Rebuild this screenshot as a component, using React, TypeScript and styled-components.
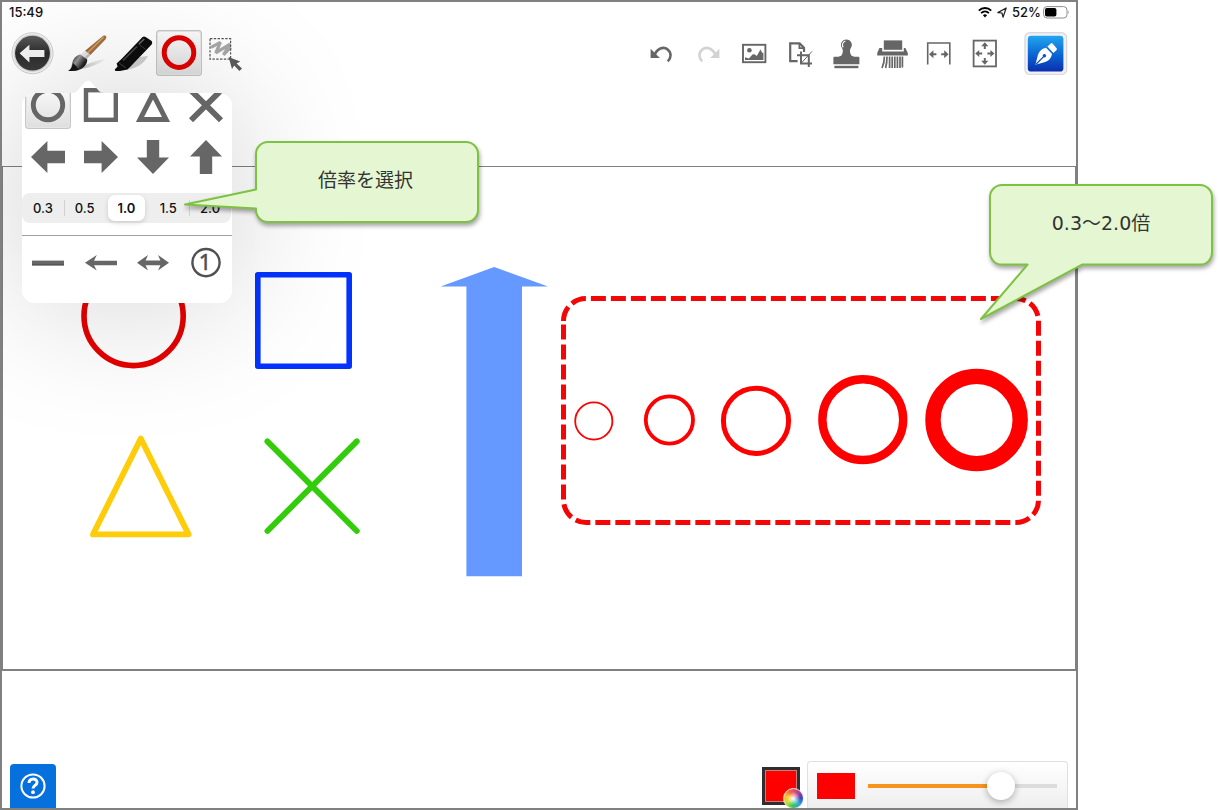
import React, { useState } from "react";
import styled, { createGlobalStyle, css } from "styled-components";

const INK = "#666666";

const GlobalStyle = createGlobalStyle`
  *, *::before, *::after { box-sizing: border-box; }
  body { margin: 0; background: #ffffff; font-family: Inter, "Noto Sans CJK JP", sans-serif; }
  button { font: inherit; }
`;

const Page = styled.div`
  position: relative;
  min-height: 100vh;
  padding-right: 142px;
  display: flex;
`;

const Device = styled.main`
  position: relative;
  overflow: hidden;
  flex: 1;
  display: flex;
  flex-direction: column;
  border: 2px solid #808080;
  background: #ffffff;
`;

const StatusBar = styled.header`
  display: flex;
  align-items: center;
  justify-content: space-between;
  height: 20px;
  padding: 0 6px 0 7px;
  font-size: 13px;
  font-weight: 500;
  line-height: 20px;
  color: #111111;
`;

const StatusGroup = styled.div<{ $gap: number }>`
  display: flex;
  align-items: center;
  gap: ${(p) => p.$gap}px;
`;

const Toolbar = styled.nav`
  display: flex;
  justify-content: space-between;
  padding: 8px 8px 6px;
`;

const ToolGroup = styled.div`
  display: flex;
`;

const ToolButton = styled.button<{ $active?: boolean; $gapAfter?: number; $gapBefore?: number }>`
  display: block;
  width: 46px;
  height: 46px;
  padding: 0;
  border: 0;
  background: none;
  margin-right: ${(p) => p.$gapAfter ?? 0}px;
  margin-left: ${(p) => p.$gapBefore ?? 0}px;
  ${(p) =>
    p.$active &&
    css`
      border-radius: 4px;
      background: linear-gradient(#fcfcfc, #dedede);
      box-shadow: inset 0 0 0 1px #c6c6c6, inset 0 0 0 2px #e6e6e6;
    `}
`;

const Glyph = styled.svg`
  display: block;
  width: 46px;
  height: 46px;
`;

const Canvas = styled.section`
  flex: 1;
  margin: 84px 0 90px;
  border: 1px solid #808080;
  border-bottom-width: 2px;
  overflow: hidden;
`;

const Drawing = styled.svg`
  display: block;
  width: 100%;
`;

const Footer = styled.footer`
  display: flex;
  align-items: flex-end;
  height: 47px;
  padding: 0 8px;
`;

const HelpButton = styled.button`
  display: grid;
  place-items: center;
  width: 46px;
  height: 44px;
  margin-right: auto;
  padding: 0;
  border: 0;
  border-radius: 4px 4px 0 0;
  background: #0670dc;
`;

const SwatchButton = styled.button`
  position: relative;
  align-self: flex-start;
  width: 38px;
  height: 38px;
  margin: 6px 7px 0 0;
  padding: 0;
  border: 3px solid #2e2e2e;
  background: #ff0000;
  box-shadow: inset 0 0 0 1px #c08080;
`;

const ColorWheel = styled.span`
  position: absolute;
  right: -7px;
  bottom: -7px;
  width: 21px;
  height: 21px;
  border: 1px solid #e8e8e8;
  border-radius: 50%;
  background: radial-gradient(#ffffff 0, #ffffff00 50%),
    conic-gradient(#e8506a, #a03f98 50deg, #3c46b8 85deg, #2ea6dc 130deg, #35c45c 185deg, #cfe030 240deg, #f8c030 290deg, #f46a30 330deg, #e8506a);
`;

const SizePanel = styled.div`
  display: flex;
  align-items: center;
  height: 48px;
  margin-bottom: -1px;
  padding: 1px 10px 0 9px;
  border: 1px solid #e0e0e0;
  border-bottom: 0;
  border-radius: 4px 4px 0 0;
  background: linear-gradient(#ffffff, #eeeeee);
`;

const PreviewChip = styled.span`
  width: 38px;
  height: 26px;
  margin-right: 13px;
  background: #ff0000;
`;

const Slider = styled.input<{ $fill: number }>`
  appearance: none;
  width: 189px;
  height: 30px;
  margin: 0;
  background: linear-gradient(to right, #f7941d ${(p) => p.$fill}%, #dcdcdc ${(p) => p.$fill}%) center / 100% 4px no-repeat;
  &::-webkit-slider-thumb {
    appearance: none;
    width: 28px;
    height: 28px;
    border-radius: 50%;
    background: #ffffff;
    box-shadow: 0 2px 7px rgba(0, 0, 0, 0.3);
  }
`;

const Popover = styled.div`
  position: absolute;
  left: 20px;
  top: 78px;
  width: 210px;
  &::before {
    content: "";
    position: absolute;
    inset: 13px 0 0;
    border-radius: 13px;
    box-shadow: 0 0 140px rgba(0, 0, 0, 0.18);
  }
`;

const PopoverBody = styled.div`
  position: relative;
  padding: 3px 0 17px;
  background: #ffffff;
  clip-path: path("M0 26A13 13 0 0 1 13 13H50Q53 13 55 11L63 2Q66 -1 69 2L77 11Q79 13 82 13H197A13 13 0 0 1 210 26V210A13 13 0 0 1 197 223H13A13 13 0 0 1 0 210Z");
`;

const ShapeGrid = styled.div`
  display: grid;
  grid-template-columns: repeat(4, 1fr);
  justify-items: center;
  row-gap: 5px;
`;

const Divider = styled.hr`
  height: 1px;
  margin: 12px 0 4px;
  border: 0;
  background: #a0a0a0;
`;

const Segments = styled.fieldset`
  display: grid;
  grid-template-columns: repeat(5, 1fr);
  height: 30px;
  margin: 13px 1px 0 0;
  padding: 0;
  border: 0;
  border-radius: 8px;
  background: #eeeeee;
`;

const Segment = styled.label<{ $on: boolean; $rule: boolean }>`
  position: relative;
  display: flex;
  align-items: center;
  justify-content: center;
  margin: 2px;
  border-radius: 7px;
  font-size: 13px;
  font-weight: ${(p) => (p.$on ? 600 : 500)};
  color: #111111;
  background: ${(p) => (p.$on ? "#ffffff" : "transparent")};
  box-shadow: ${(p) => (p.$on ? "0 2px 5px rgba(0, 0, 0, 0.14)" : "none")};
  &::after {
    content: "";
    position: absolute;
    left: -2px;
    top: 5px;
    bottom: 5px;
    width: 1px;
    background: ${(p) => (p.$rule ? "#d2d2d4" : "transparent")};
  }
  input {
    position: absolute;
    inset: 0;
    margin: 0;
    opacity: 0;
  }
`;

const Callout = styled.aside<{ $w: number; $h: number }>`
  position: absolute;
  display: flex;
  width: ${(p) => p.$w}px;
  height: ${(p) => p.$h}px;
  color: #333333;
  font-family: "DejaVu Sans", "Noto Sans CJK JP", sans-serif;
  font-weight: 400;
  font-size: 19px;
  line-height: 28px;
`;

const ScaleCallout = styled(Callout)`
  left: 180px;
  top: 136px;
`;

const RangeCallout = styled(Callout)`
  right: 0;
  top: 179px;
`;

const CalloutShape = styled.svg`
  position: absolute;
  inset: 0;
  filter: drop-shadow(1px 3px 2px rgba(0, 0, 0, 0.35));
`;

const CalloutText = styled.p<{ $left: number; $width: number }>`
  position: relative;
  width: ${(p) => p.$width}px;
  margin: 30px 0 0 ${(p) => p.$left}px;
  text-align: center;
`;

const BackIcon = () => (
  <Glyph viewBox="0 0 46 46" aria-hidden>
    <defs>
      <linearGradient id="back" x1="0" y1="0" x2="0" y2="1">
        <stop offset="0" stopColor="#5a5a5a" />
        <stop offset="0.5" stopColor="#2c2c2c" />
        <stop offset="1" stopColor="#3c3c3c" />
      </linearGradient>
    </defs>
    <circle cx="22.5" cy="23.2" r="20.5" fill="#f6f6f6" stroke="#cfcfcf" />
    <circle cx="22.5" cy="23.2" r="18.8" fill="#d6d6d6" />
    <circle cx="22.5" cy="23.2" r="17.4" fill="url(#back)" />
    <path d="M9.6 23.2 19.4 14.8V20H34.4V27H19.4V32.4Z" fill="#f4f4f4" />
  </Glyph>
);

const BrushIcon = () => (
  <Glyph viewBox="0 0 46 46" aria-hidden>
    <defs>
      <linearGradient id="hair" x1="0" y1="0" x2="1" y2="0.6">
        <stop offset="0.2" stopColor="#1c1c1c" />
        <stop offset="0.5" stopColor="#9a9a9a" />
        <stop offset="0.85" stopColor="#222222" />
      </linearGradient>
      <linearGradient id="shade" x1="0" y1="0" x2="1" y2="0">
        <stop offset="0" stopColor="#777777" stopOpacity="0.6" />
        <stop offset="1" stopColor="#aaaaaa" stopOpacity="0.1" />
      </linearGradient>
    </defs>
    <path d="M12 40C20 39 33 36 42 29C34 30 25 33 20 36Z" fill="url(#shade)" />
    <path d="M41 5.5C43 6 42.6 8 41.4 9.6L26.4 25L21 20.8L38 6.8Q39.6 5.2 41 5.5Z" fill="#a5703e" />
    <path d="M39.6 7 24 22.6" stroke="#d3a373" strokeWidth="1.4" />
    <path d="M21 20.8 26.4 25 22.6 29 17 24.4Z" fill="#e4e4e4" />
    <path d="M26.4 25 24.6 23.6 20.8 27.4 22.6 29Z" fill="#bdbdbd" />
    <path d="M16.6 24.6 23.2 29.6C23.6 34 20 38.4 14.6 40C11 41 7.6 41.2 4.2 40.8C8 38.8 7.4 35.6 8.6 31.8C10 27.8 13 25 16.6 24.6Z" fill="url(#hair)" />
    <path d="M4.2 40.8C8 38.8 8 36 9 33L13 37L14.6 40C11 41 7.6 41.2 4.2 40.8Z" fill="#161616" />
  </Glyph>
);

const MarkerIcon = () => (
  <Glyph viewBox="0 0 46 46" aria-hidden>
    <path d="M16 40C25 39 34 34 38 26L30 27Z" fill="#b0b0b0" opacity="0.6" />
    <path d="M32.6 7Q34 6 35.6 7L41 10.4Q43 12 41.6 14.6L20.6 36.6L17.4 39.6L10 41H5.4L4.8 39.4L7.6 36.4L6.6 33.6L12 28.4Z" fill="#0d0d0d" />
    <path d="M27 16.6 13 30.6" stroke="#4a4a4a" strokeWidth="1.4" />
    <path d="M34.2 9 29 14" stroke="#6a6a6a" strokeWidth="1.6" />
    <path d="M28 13.6 35.6 19.4" stroke="#3a3a3a" strokeWidth="1" />
    <path d="M9 33 15.6 37.6" stroke="#444444" strokeWidth="1" />
  </Glyph>
);

const RedRingIcon = () => (
  <Glyph viewBox="0 0 46 46" aria-hidden>
    <circle cx="23" cy="22.6" r="14.8" fill="none" stroke="#e00000" strokeWidth="5" />
  </Glyph>
);

const LassoIcon = () => (
  <Glyph viewBox="0 0 46 46" aria-hidden>
    <path d="M9 17.4 18.4 12.4 13.8 22.8 28 14.2 21.4 24.8 28.8 17.4" fill="none" stroke="#a8a8a8" strokeWidth="3.2" strokeLinejoin="bevel" />
    <rect x="8" y="8.6" width="20.6" height="20.6" fill="none" stroke="#555555" strokeWidth="1.2" strokeDasharray="2.4 1.4" />
    <path d="M26.6 27 38.2 31.4 34.6 33.4 40 38.6 37.4 41 32.2 35.6 30 39Z" fill="#5c5c5c" />
  </Glyph>
);

const undoArt = (
  <>
    <path d="M11.6 18.8V28H21L17.8 25Z" />
    <path d="M15.6 25C18 18.4 24.4 16.2 28.6 19.4C32.6 22.6 32.4 28 28.8 31.4" fill="none" strokeWidth="2.6" />
  </>
);

const UndoIcon = () => (
  <Glyph viewBox="0 0 46 46" fill={INK} stroke={INK} strokeWidth="0" aria-hidden>{undoArt}</Glyph>
);

const RedoIcon = () => (
  <Glyph viewBox="0 0 46 46" fill="#d2d2d2" stroke="#d2d2d2" strokeWidth="0" aria-hidden>
    <g transform="matrix(-1 0 0 1 46 0)">{undoArt}</g>
  </Glyph>
);

const ImageIcon = () => (
  <Glyph viewBox="0 0 46 46" aria-hidden>
    <rect x="12" y="14.8" width="22.4" height="17.4" fill="none" stroke={INK} strokeWidth="1.9" />
    <circle cx="18.4" cy="20.2" r="2.3" fill={INK} />
    <path d="M14 30V27.2L18 28.4 21.4 24.6 23.6 24.2 25.8 26 29.4 19.6 31.4 23 32.4 22.4V30Z" fill={INK} />
  </Glyph>
);

const CropIcon = () => (
  <Glyph viewBox="0 0 46 46" fill="none" stroke={INK} aria-hidden>
    <path d="M20.6 31.2H13.2V13.4H22.6L27 17.8V22" strokeWidth="2.2" />
    <path d="M22.4 13V18.2H27.4" strokeWidth="1.8" />
    <path d="M24 21.4V33.4H35M20 25.2H31.8V37" strokeWidth="2" />
    <path d="M24.6 32.8 35 21.4" strokeWidth="1" />
  </Glyph>
);

const StampIcon = () => (
  <Glyph viewBox="0 0 46 46" fill={INK} aria-hidden>
    <path d="M23.4 9.4A5.4 5.4 0 0 1 27.6 18.2C26.6 20.4 26.6 23 28.6 25.8L31.4 26.8H35.4Q36.4 26.8 36.4 27.8V34.2H10.4V27.8Q10.4 26.8 11.4 26.8H15.4L18.2 25.8C20.2 23 20.2 20.4 19.2 18.2A5.4 5.4 0 0 1 23.4 9.4Z" />
    <rect x="11.4" y="35.8" width="24" height="2.4" />
    <path d="M20.2 17.4C18.6 14.8 19.6 12 22.4 11" fill="none" stroke="#ffffff" strokeWidth="1.1" />
  </Glyph>
);

const ShredderIcon = () => (
  <Glyph viewBox="0 0 46 46" fill={INK} aria-hidden>
    <rect x="14.8" y="10.4" width="18.4" height="9.4" />
    <path d="M10.4 18H13.2V21.4H34.8V18H36.4L38.8 23V25.4H8.2V23Z" />
    <path d="M15.4 26.6Q15.4 33 13 38M18 26.6Q18 33 16.6 38M20.6 26.6V38M23.2 26.6V38M25.8 26.6V38M28.4 26.6V38M31 26.6V38M33.4 26.6V37.6" fill="none" stroke={INK} strokeWidth="1.7" />
  </Glyph>
);

const FitWidthIcon = () => (
  <Glyph viewBox="0 0 46 46" aria-hidden>
    <path d="M12.7 34.6V13H34.8V34.6" fill="none" stroke={INK} strokeWidth="1.6" />
    <path d="M14 24.2 18.4 20.2V23.2H21.4V25.2H18.4V28.2ZM33.6 24.2 29.2 20.2V23.2H26.2V25.2H29.2V28.2Z" fill={INK} />
  </Glyph>
);

const FitPageIcon = () => (
  <Glyph viewBox="0 0 46 46" aria-hidden>
    <rect x="12.6" y="10.6" width="22.4" height="25.8" fill="none" stroke={INK} strokeWidth="1.8" />
    <path d="M14.2 23.5 18.2 19.9V22.5H21.2V24.5H18.2V27.1ZM33.4 23.5 29.4 19.9V22.5H26.4V24.5H29.4V27.1ZM23.8 12.2 27.4 16.2H24.8V19H22.8V16.2H20.2ZM23.8 34.8 27.4 30.8H24.8V28H22.8V30.8H20.2Z" fill={INK} />
  </Glyph>
);

const PenIcon = () => (
  <Glyph viewBox="0 0 46 46" aria-hidden>
    <defs>
      <linearGradient id="pen" x1="0" y1="0" x2="0" y2="1">
        <stop offset="0" stopColor="#22a6ef" />
        <stop offset="0.55" stopColor="#0a62d2" />
        <stop offset="1" stopColor="#0a2fae" />
      </linearGradient>
    </defs>
    <rect x="3" y="2.8" width="41.6" height="41.6" rx="5" fill="#f2f2f6" stroke="#d9d9df" strokeWidth="1.4" />
    <rect x="5.8" y="5.8" width="35.6" height="35.8" rx="3.4" fill="url(#pen)" />
    <path d="M29.4 13 30.6 13.4 34.8 18.4 34.8 19.8 31.4 23 25.4 16.6Z" fill="#ffffff" />
    <path d="M24 17.8 30 24C29.2 28.4 26.6 31.4 21.4 32.6L13.4 34.8L15.4 27C16.6 21.8 19.4 18.6 24 17.8Z" fill="#ffffff" />
    <path d="M14 34.2 21.6 26.6" stroke="#0a50c4" strokeWidth="1.3" />
    <circle cx="22.4" cy="25.8" r="1.7" fill="#0a50c4" />
  </Glyph>
);

const WifiIcon = () => (
  <svg width="14" height="12" viewBox="0 0 14 12" fill="none" stroke="#000000" strokeWidth="1.9" aria-label="Wi-Fi">
    <path d="M0.8 4.6C4.3 1.1 9.7 1.1 13.2 4.6" />
    <path d="M3.1 7.1C5.3 5 8.7 5 10.9 7.1" />
    <path d="M7 11.4 4.9 9.2Q7 7.4 9.1 9.2Z" fill="#000000" stroke="none" />
  </svg>
);

const LocationIcon = () => (
  <svg width="10" height="11" viewBox="0 0 10 11" fill="none" stroke="#222222" strokeWidth="1.2" strokeLinejoin="round" aria-label="Location">
    <path d="M0.8 5.6 9.2 1 6 10.2 5 6Z" />
  </svg>
);

const BatteryIcon = () => (
  <svg width="27" height="13" viewBox="0 0 27 13" aria-label="Battery">
    <rect x="0.6" y="0.6" width="23.4" height="11.4" rx="3.4" fill="#ffffff" stroke="#8e8e8e" />
    <rect x="2" y="2" width="11.4" height="8.6" rx="1.8" fill="#000000" />
    <path d="M25.4 4.6Q27 6.3 25.4 8Z" fill="#8e8e8e" />
  </svg>
);

const arrowUp = "M23 6 39 22.4H29.2V40H16.8V22.4H7Z";

const shapeArt: { name: string; art: React.ReactNode }[] = [
  { name: "円", art: <circle cx="23" cy="22" r="14.7" fill="none" stroke={INK} strokeWidth="4.9" /> },
  { name: "四角", art: <rect x="8" y="7.2" width="29.8" height="29.6" fill="none" stroke={INK} strokeWidth="4.4" /> },
  { name: "三角", art: <path d="M23 11 36 36.4H10Z" fill="none" stroke={INK} strokeWidth="5" /> },
  { name: "バツ", art: <path d="M8 7.4 38 37.2M38 7.4 8 37.2" fill="none" stroke={INK} strokeWidth="5.8" /> },
  { name: "左矢印", art: <path d={arrowUp} transform="rotate(-90 23 23)" fill={INK} /> },
  { name: "右矢印", art: <path d={arrowUp} transform="rotate(90 23 23)" fill={INK} /> },
  { name: "下矢印", art: <path d={arrowUp} transform="rotate(180 23 23)" fill={INK} /> },
  { name: "上矢印", art: <path d={arrowUp} fill={INK} /> },
];

const lineArt: { name: string; art: React.ReactNode }[] = [
  {
    name: "直線",
    art: (
      <>
        <rect x="7" y="20.6" width="32" height="4.6" fill={INK} />
        <path d="M7 25H39" stroke="#444444" />
      </>
    ),
  },
  { name: "矢印", art: <path d="M7 22.8 18.8 15 16 20.8H39V25.2H16L18.8 30.6Z" fill={INK} /> },
  { name: "両矢印", art: <path d="M7 22.8 18 15 15.6 20.6H30.4L28 15 39 22.8 28 30.6 30.4 25.2H15.6L18 30.6Z" fill={INK} /> },
  {
    name: "番号",
    art: (
      <>
        <circle cx="23" cy="22.6" r="13.6" fill="none" stroke="#505050" strokeWidth="2.4" />
        <text x="22" y="30.4" textAnchor="middle" fontFamily="Noto Sans, sans-serif" fontSize="22" fill="#505050" stroke="#505050" strokeWidth="0.5">1</text>
      </>
    ),
  },
];

const rings = [
  { cx: 593.8, cy: 421, r: 18.6, w: 1.8 },
  { cx: 669.4, cy: 420, r: 23.6, w: 3.8 },
  { cx: 756, cy: 420.8, r: 32.6, w: 5 },
  { cx: 862.8, cy: 419.6, r: 40.4, w: 8.4 },
  { cx: 976.6, cy: 420, r: 43.6, w: 15.4 },
];

const scales = ["0.3", "0.5", "1.0", "1.5", "2.0"];

const Sketch = () => (
  <Drawing viewBox="3 167 1072 501" role="img" aria-label="図形">
    <circle cx="133.6" cy="316" r="49.6" fill="none" stroke="#e60000" strokeWidth="5.6" />
    <rect x="257.8" y="274.8" width="91.4" height="91.4" fill="none" stroke="#0433ff" strokeWidth="5.6" strokeLinejoin="round" />
    <path d="M140.8 438.6 188.6 534.4H93Z" fill="none" stroke="#ffcc0a" strokeWidth="5.8" strokeLinejoin="round" />
    <path d="M267.4 441.4 356.8 531M356.8 441.4 267.4 531" fill="none" stroke="#33cc0a" strokeWidth="5.8" strokeLinecap="round" />
    <path d="M494.2 267 548 286.4H522V576.2H466.4V286.4H440.6Z" fill="#6699ff" />
    <path
      d="M563.5 321A22.5 22.5 0 0 1 586 298.5H1016A22.5 22.5 0 0 1 1038.5 321V500A22.5 22.5 0 0 1 1016 522.5H586A22.5 22.5 0 0 1 563.5 500Z"
      fill="none"
      stroke="#f40606"
      strokeWidth="5"
      strokeDasharray="15 5"
    />
    {rings.map((ring) => (
      <circle key={ring.cx} cx={ring.cx} cy={ring.cy} r={ring.r} fill="none" stroke="#ff0000" strokeWidth={ring.w} />
    ))}
  </Drawing>
);

export default function App() {
  const [scale, setScale] = useState("1.0");
  const [shape, setShape] = useState("円");
  const [size, setSize] = useState(74);
  const chosen = scales.indexOf(scale);

  return (
    <Page>
      <GlobalStyle />
      <Device>
        <StatusBar>
          <span>15:49</span>
          <StatusGroup $gap={5}>
            <WifiIcon />
            <LocationIcon />
            <StatusGroup $gap={2}>
              <span>52%</span>
              <BatteryIcon />
            </StatusGroup>
          </StatusGroup>
        </StatusBar>

        <Toolbar>
          <ToolGroup>
            <ToolButton aria-label="戻る" $gapAfter={8}><BackIcon /></ToolButton>
            <ToolButton aria-label="筆"><BrushIcon /></ToolButton>
            <ToolButton aria-label="マーカー"><MarkerIcon /></ToolButton>
            <ToolButton aria-label="図形" $active><RedRingIcon /></ToolButton>
            <ToolButton aria-label="選択"><LassoIcon /></ToolButton>
          </ToolGroup>
          <ToolGroup>
            <ToolButton aria-label="元に戻す"><UndoIcon /></ToolButton>
            <ToolButton aria-label="やり直す"><RedoIcon /></ToolButton>
            <ToolButton aria-label="画像"><ImageIcon /></ToolButton>
            <ToolButton aria-label="切り抜き"><CropIcon /></ToolButton>
            <ToolButton aria-label="スタンプ"><StampIcon /></ToolButton>
            <ToolButton aria-label="消去"><ShredderIcon /></ToolButton>
            <ToolButton aria-label="幅に合わせる"><FitWidthIcon /></ToolButton>
            <ToolButton aria-label="全体表示"><FitPageIcon /></ToolButton>
            <ToolButton aria-label="ペン" $gapBefore={15}><PenIcon /></ToolButton>
          </ToolGroup>
        </Toolbar>

        <Canvas>
          <Sketch />
        </Canvas>

        <Footer>
          <HelpButton aria-label="ヘルプ">
            <svg width="28" height="28" viewBox="0 0 28 28" fill="none" stroke="#ffffff" aria-hidden>
              <circle cx="14" cy="14" r="11.6" strokeWidth="2" />
              <path d="M10 11C10 5.6 18 5.8 18 10.4C18 13.4 14 13.4 14 16.6" strokeWidth="3" />
              <circle cx="14" cy="20.2" r="1.9" fill="#ffffff" stroke="none" />
            </svg>
          </HelpButton>
          <SwatchButton aria-label="色"><ColorWheel /></SwatchButton>
          <SizePanel>
            <PreviewChip />
            <Slider
              type="range"
              aria-label="太さ"
              min={0}
              max={100}
              value={size}
              $fill={size}
              onChange={(e) => setSize(Number(e.target.value))}
            />
          </SizePanel>
        </Footer>

        <Popover>
          <PopoverBody>
            <ShapeGrid>
              {shapeArt.map((item) => (
                <ToolButton key={item.name} aria-label={item.name} $active={shape === item.name} onClick={() => setShape(item.name)}>
                  <Glyph viewBox="0 0 46 46" aria-hidden>{item.art}</Glyph>
                </ToolButton>
              ))}
            </ShapeGrid>
            <Segments aria-label="倍率">
              {scales.map((value, i) => (
                <Segment key={value} $on={value === scale} $rule={i > 0 && i !== chosen && i !== chosen + 1}>
                  <input type="radio" name="scale" value={value} checked={value === scale} onChange={() => setScale(value)} />
                  {value}
                </Segment>
              ))}
            </Segments>
            <Divider />
            <ShapeGrid>
              {lineArt.map((item) => (
                <ToolButton key={item.name} aria-label={item.name}>
                  <Glyph viewBox="0 0 46 46" aria-hidden>{item.art}</Glyph>
                </ToolButton>
              ))}
            </ShapeGrid>
          </PopoverBody>
        </Popover>
      </Device>

      <ScaleCallout $w={304} $h={94}>
        <CalloutShape width="304" height="94" viewBox="180 136 304 94" aria-hidden>
          <path
            d="M268 142H466A12 12 0 0 1 478 154V210A12 12 0 0 1 466 222H268A12 12 0 0 1 256 210V208.6L185 204.4L256 189.4V154A12 12 0 0 1 268 142Z"
            fill="#e4f7d2" stroke="#7dc242" strokeWidth="2" strokeLinejoin="round"
          />
        </CalloutShape>
        <CalloutText $left={74} $width={223}>倍率を選択</CalloutText>
      </ScaleCallout>

      <RangeCallout $w={244} $h={150}>
        <CalloutShape width="244" height="150" viewBox="976 179 244 150" aria-hidden>
          <path
            d="M1002 185H1200A12 12 0 0 1 1212 197V252.6A12 12 0 0 1 1200 264.6H1082L981 319L1027.6 264.6H1002A12 12 0 0 1 990 252.6V197A12 12 0 0 1 1002 185Z"
            fill="#e4f7d2" stroke="#7dc242" strokeWidth="2" strokeLinejoin="round"
          />
        </CalloutShape>
        <CalloutText $left={14} $width={222}>0.3〜2.0倍</CalloutText>
      </RangeCallout>
    </Page>
  );
}
